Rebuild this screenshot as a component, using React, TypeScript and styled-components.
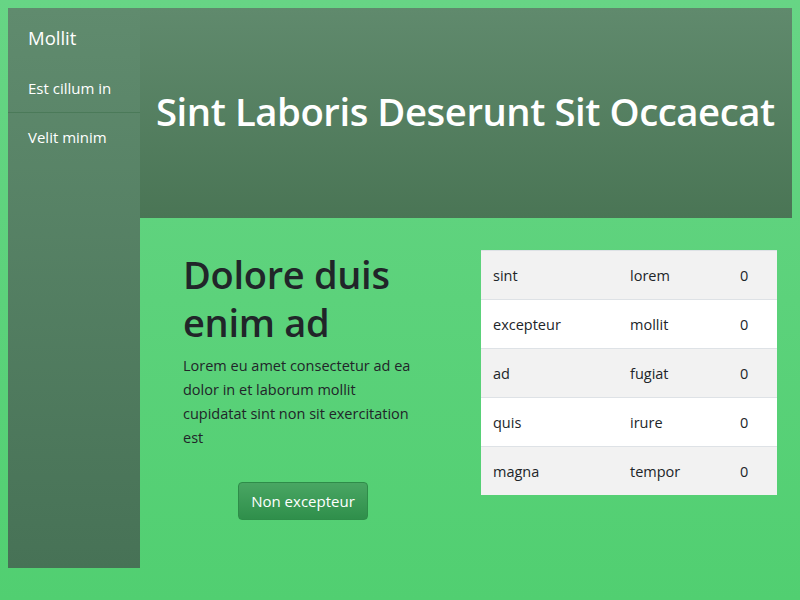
import styled, { createGlobalStyle } from 'styled-components';

const rows = [
  ['sint', 'lorem', '0'],
  ['excepteur', 'mollit', '0'],
  ['ad', 'fugiat', '0'],
  ['quis', 'irure', '0'],
  ['magna', 'tempor', '0'],
];

const columnWidths = [137, 110, 49];

function App() {
  return (
    <>
      <GlobalStyle />
      <Page>
        <Sidebar>
          <Brand>Mollit</Brand>
          <NavItem divided>Est cillum in</NavItem>
          <NavItem>Velit minim</NavItem>
        </Sidebar>
        <Main>
          <Header>
            <HeaderTitle>Sint Laboris Deserunt Sit Occaecat</HeaderTitle>
          </Header>
          <Content>
            <Intro>
              <IntroTitle>Dolore duis enim ad</IntroTitle>
              <IntroText>
                Lorem eu amet consectetur ad ea dolor in et laborum mollit cupidatat sint non sit
                exercitation est
              </IntroText>
              <ActionButton>Non excepteur</ActionButton>
            </Intro>
            <DataTable>
              <colgroup>
                {columnWidths.map((w) => (
                  <Column key={w} size={w} />
                ))}
              </colgroup>
              <tbody>
                {rows.map((row, i) => (
                  <Row key={row[0]} striped={i % 2 === 0}>
                    <Cell>{row[0]}</Cell>
                    <Cell>{row[1]}</Cell>
                    <Cell>{row[2]}</Cell>
                  </Row>
                ))}
              </tbody>
            </DataTable>
          </Content>
        </Main>
      </Page>
    </>
  );
}

const GlobalStyle = createGlobalStyle`
  html {
    min-height: 100%;
    background: linear-gradient(180deg, #67d585 0%, #51cf71 100%);
  }

  body {
    margin: 8px;
    font-family: "Open Sans", "Noto Sans", sans-serif;
    color: #212529;
  }
`;

const Page = styled.div`
  display: flex;
  align-items: flex-start;
`;

const Sidebar = styled.nav`
  display: flex;
  flex-direction: column;
  width: 132px;
  height: 560px;
  flex-shrink: 0;

  background: linear-gradient(180deg, #608b6e 0%, #477256 100%);
`;

const Brand = styled.div`
  padding: 18px 20px 14px;

  font-size: 18.5px;
  line-height: 24px;
  color: #ffffff;
`;

const NavItem = styled.div<{ divided?: boolean }>`
  padding: 12px 20px;

  font-size: 15px;
  line-height: 24px;
  color: #ffffff;

  border-bottom: 1px solid ${(p) => (p.divided ? '#4b7a59' : 'transparent')};
`;

const Main = styled.div`
  display: flex;
  flex-direction: column;
  flex: 1;
`;

const Header = styled.header`
  display: flex;
  align-items: center;
  height: 210px;

  padding: 0 0 4px 16px;
  box-sizing: border-box;

  background: linear-gradient(180deg, #608a6d 0%, #4a7555 100%);
`;

const HeaderTitle = styled.h1`
  margin: 0;

  font-size: 38.3px;
  font-weight: 600;
  line-height: 46px;
  letter-spacing: -0.45px;
  color: #ffffff;
  white-space: nowrap;
`;

const Content = styled.div`
  display: grid;
  grid-template-columns: 240px 296px;
  column-gap: 58px;
  align-items: start;

  padding: 32px 15px 0 43px;
`;

const Intro = styled.div`
  display: flex;
  flex-direction: column;
  align-items: flex-start;
`;

const IntroTitle = styled.h2`
  margin: 0 0 8px;

  font-size: 38px;
  font-weight: 600;
  line-height: 48px;
  letter-spacing: -0.3px;
  color: #212529;
`;

const IntroText = styled.p`
  margin: 0 0 32px;

  font-size: 14.5px;
  line-height: 24px;
  color: #212529;
`;

const ActionButton = styled.button`
  align-self: center;
  height: 38px;

  padding: 6px 12px;

  font-family: inherit;
  font-size: 15px;
  line-height: 24px;
  color: #ffffff;

  background: linear-gradient(180deg, #49a663 0%, #2f8f4b 100%);
  border: 1px solid #2e8c49;
  border-radius: 4px;
  cursor: pointer;
`;

const DataTable = styled.table`
  width: 296px;
  table-layout: fixed;
  border-collapse: collapse;
  background: #ffffff;
`;

const Column = styled.col<{ size: number }>`
  width: ${(p) => p.size}px;
`;

const Row = styled.tr<{ striped: boolean }>`
  background: ${(p) => (p.striped ? '#f2f2f2' : '#ffffff')};
  border-top: 1px solid #dee2e6;
`;

const Cell = styled.td`
  padding: 13px 12px 11px;

  font-size: 14.5px;
  line-height: 24px;
  color: #212529;
  white-space: nowrap;
`;

export default App;
